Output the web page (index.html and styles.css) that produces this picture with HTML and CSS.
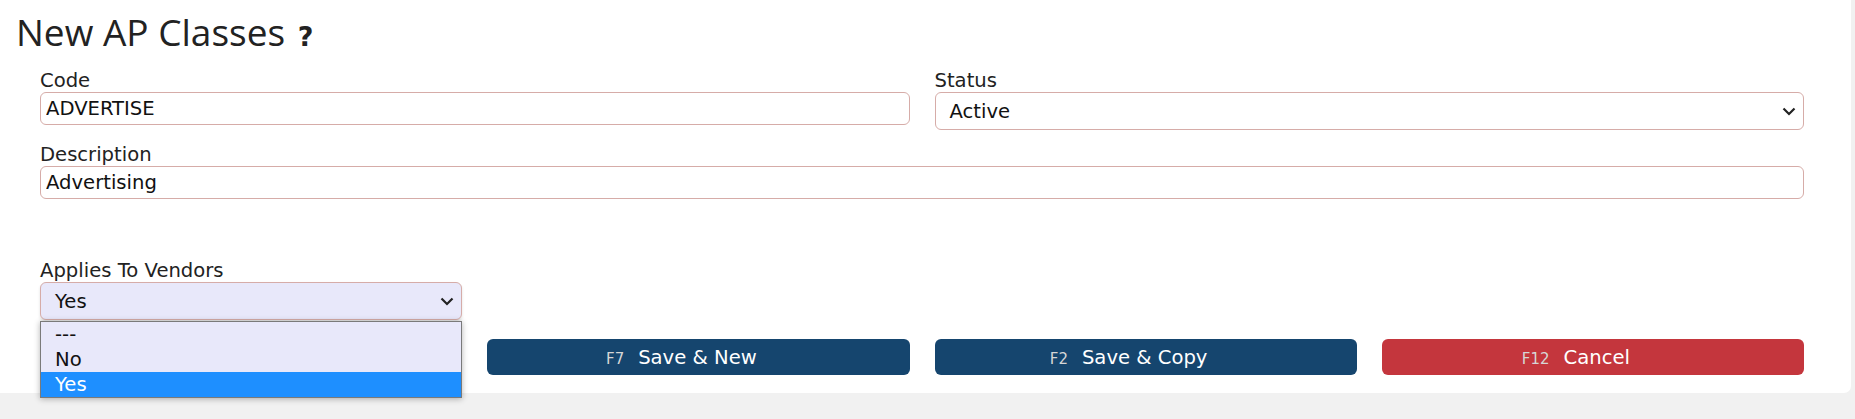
FILE: index.html
```html
<!DOCTYPE html>
<html>
<head>
<meta charset="utf-8">
<link rel="stylesheet" href="styles.css">
</head>
<body>
<div class="card">
  <h1 class="title">New AP Classes <span class="help">?</span></h1>
  <div class="form">
    <div class="field span2">
      <label class="label">Code</label>
      <input class="input" type="text" value="ADVERTISE" readonly>
    </div>
    <div class="field span2">
      <label class="label">Status</label>
      <div class="select">
        <span>Active</span>
        <svg class="chev" width="14" height="9" viewBox="0 0 14 9"><path d="M1.5 1.5 L7 7 L12.5 1.5" fill="none" stroke="#222" stroke-width="2.2"/></svg>
      </div>
    </div>
    <div class="field span4">
      <label class="label">Description</label>
      <input class="input" type="text" value="Advertising" readonly>
    </div>
    <div class="field applies">
      <label class="label">Applies To Vendors</label>
      <div class="select open">
        <span>Yes</span>
        <svg class="chev" width="14" height="9" viewBox="0 0 14 9"><path d="M1.5 1.5 L7 7 L12.5 1.5" fill="none" stroke="#222" stroke-width="2.2"/></svg>
      </div>
      <ul class="dropdown">
        <li class="opt">---</li>
        <li class="opt">No</li>
        <li class="opt selected">Yes</li>
      </ul>
    </div>
    <div class="buttons">
      <button class="btn navy"><span class="key">F7</span>Save &amp; New</button>
      <button class="btn navy"><span class="key">F2</span>Save &amp; Copy</button>
      <button class="btn red"><span class="key">F12</span>Cancel</button>
    </div>
  </div>
</div>
</body>
</html>
```
FILE: styles.css
```css
* { box-sizing: border-box; }
html, body { margin: 0; padding: 0; }
body {
  background: #f1f1f1;
  font-family: "DejaVu Sans", Verdana, sans-serif;
  color: #212529;
  width: 1855px;
  height: 419px;
  overflow: hidden;
}
.card {
  background: #fff;
  width: 1851px;
  height: 393px;
  border-radius: 0 0 7px 0;
  padding: 7px 47px 17px 16px;
}
.title {
  margin: 0;
  font-family: "Open Sans", sans-serif;
  font-weight: 400;
  font-size: 37px;
  line-height: 50px;
  color: #222;
}
.help {
  font-family: "DejaVu Sans", sans-serif;
  font-weight: 700;
  font-size: 27px;
  margin-left: 3px;
}
.form {
  margin: 7px 0 0 24px;
  display: grid;
  grid-template-columns: repeat(4, 1fr);
  column-gap: 25px;
  row-gap: 13px;
}
.field { display: flex; flex-direction: column; position: relative; }
.span2 { grid-column: span 2; }
.span4 { grid-column: span 4; }
.applies { grid-column: 1 / 2; grid-row: 3; margin-top: 47px; z-index: 5; }
.label {
  font-size: 19.6px;
  line-height: 23px;
  color: #222;
}
.input {
  height: 33px;
  border: 1px solid #d6aca8;
  border-radius: 6px;
  padding: 0 5px;
  font-family: "DejaVu Sans", Verdana, sans-serif;
  font-size: 19.6px;
  color: #111;
  background: #fff;
  outline: none;
}
.select {
  height: 38px;
  border: 1px solid #d6aca8;
  border-radius: 6px;
  padding: 0 7px 0 14px;
  display: flex;
  align-items: center;
  justify-content: space-between;
  font-size: 19.6px;
  color: #111;
  background: #fff;
}
.select.open {
  background: #e8e8fa;
  box-shadow: 0 2px 3px rgba(0,0,0,0.12);
}
.chev { display: block; }
.dropdown {
  position: absolute;
  left: 0;
  right: 0;
  top: 100%;
  margin: 1px 0 0 0;
  padding: 0;
  list-style: none;
  background: #e8e8fa;
  border: 1px solid #7a7a7a;
  box-shadow: 0 1px 6px rgba(0,0,0,0.3);
}
.opt {
  height: 25px;
  line-height: 26px;
  padding-left: 14px;
  font-size: 19.6px;
  color: #111;
}
.opt.selected { background: #1e8fff; color: #fff; }
.buttons {
  grid-column: 2 / 5;
  grid-row: 4;
  display: grid;
  grid-template-columns: repeat(3, 1fr);
  column-gap: 25px;
  margin-top: 6px;
}
.btn {
  height: 36px;
  border: none;
  border-radius: 6px;
  color: #fff;
  font-family: "DejaVu Sans", Verdana, sans-serif;
  font-size: 19.6px;
  padding: 0 34px 0 0;
  display: flex;
  align-items: center;
  justify-content: center;
}
.navy { background: #15456e; }
.red { background: #c4363d; }
.key {
  font-size: 15px;
  color: #d6d6d6;
  margin-right: 14px;
  padding-top: 3px;
}
```
